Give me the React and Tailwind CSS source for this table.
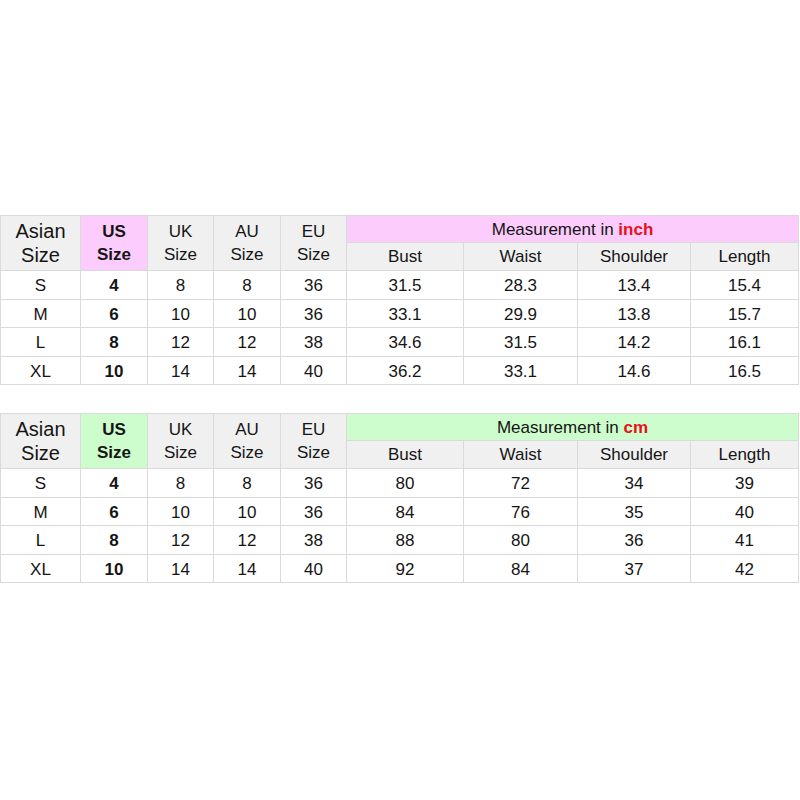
const sizes = ["S", "M", "L", "XL"]
const us = ["4", "6", "8", "10"]
const uk = ["8", "10", "12", "14"]
const au = ["8", "10", "12", "14"]
const eu = ["36", "36", "38", "40"]

const inchData = [
    ["31.5", "28.3", "13.4", "15.4"],
    ["33.1", "29.9", "13.8", "15.7"],
    ["34.6", "31.5", "14.2", "16.1"],
    ["36.2", "33.1", "14.6", "16.5"],
]

const cmData = [
    ["80", "72", "34", "39"],
    ["84", "76", "35", "40"],
    ["88", "80", "36", "41"],
    ["92", "84", "37", "42"],
]

function SizeTable({ unit, accent, rows }) {
    const cell = "border border-[#dadada] text-center p-0"
    const data = `${cell} pt-[2px]`
    return (
        <table className="table-fixed border-collapse w-[798px] text-[17px] text-[#151515] leading-none">
            <colgroup>
                <col className="w-[80px]" />
                <col className="w-[67px]" />
                <col className="w-[66px]" />
                <col className="w-[67px]" />
                <col className="w-[66px]" />
                <col className="w-[117px]" />
                <col className="w-[114px]" />
                <col className="w-[113px]" />
                <col className="w-[108px]" />
            </colgroup>
            <thead>
                <tr className="h-[27px]">
                    <th rowSpan={2} className={`${cell} bg-[#f0f0f0] font-normal text-[20px] leading-[24px]`}>
                        Asian
                        <br />
                        Size
                    </th>
                    <th rowSpan={2} className={`${cell} ${accent} font-bold leading-[23px]`}>
                        US
                        <br />
                        Size
                    </th>
                    <th rowSpan={2} className={`${cell} bg-[#f0f0f0] font-normal leading-[23px]`}>
                        UK
                        <br />
                        Size
                    </th>
                    <th rowSpan={2} className={`${cell} bg-[#f0f0f0] font-normal leading-[23px]`}>
                        AU
                        <br />
                        Size
                    </th>
                    <th rowSpan={2} className={`${cell} bg-[#f0f0f0] font-normal leading-[23px]`}>
                        EU
                        <br />
                        Size
                    </th>
                    <th colSpan={4} className={`${cell} ${accent} font-normal`}>
                        Measurement in <span className="font-bold text-[#e8101a]">{unit}</span>
                    </th>
                </tr>
                <tr className="h-[28px]">
                    {["Bust", "Waist", "Shoulder", "Length"].map((h) => (
                        <th key={h} className={`${cell} bg-[#f0f0f0] font-normal`}>
                            {h}
                        </th>
                    ))}
                </tr>
            </thead>
            <tbody>
                {sizes.map((s, i) => (
                    <tr key={s} className="h-[28.5px]">
                        <td className={data}>{s}</td>
                        <td className={`${data} font-bold`}>{us[i]}</td>
                        <td className={data}>{uk[i]}</td>
                        <td className={data}>{au[i]}</td>
                        <td className={data}>{eu[i]}</td>
                        {rows[i].map((v, j) => (
                            <td key={j} className={data}>
                                {v}
                            </td>
                        ))}
                    </tr>
                ))}
            </tbody>
        </table>
    )
}

export default function App() {
    return (
        <div className="w-[800px] h-[800px] bg-white pt-[215px] font-['Liberation_Sans',Arial,sans-serif]">
            <div className="flex flex-col gap-[28px]">
                <SizeTable unit="inch" accent="bg-[#fccdfc]" rows={inchData} />
                <SizeTable unit="cm" accent="bg-[#cdfccd]" rows={cmData} />
            </div>
        </div>
    )
}
